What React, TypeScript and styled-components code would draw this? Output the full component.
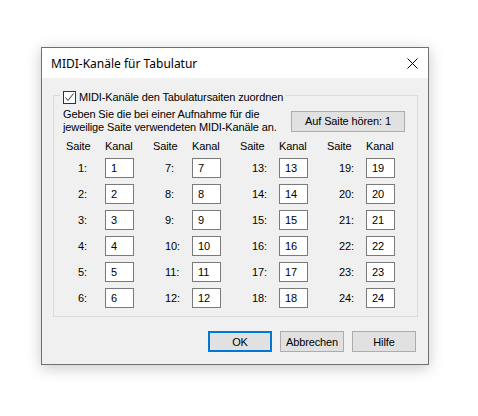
import React from 'react';
import styled, { createGlobalStyle } from 'styled-components';

const Global = createGlobalStyle`
  html, body { margin: 0; padding: 0; background: #ffffff; }
  body {
    font-family: "Liberation Sans", Arial, sans-serif;
    font-size: 11px;
    letter-spacing: -0.12px;
    color: #000000;
  }
  *, *::before, *::after { box-sizing: border-box; }
`;

const Page = styled.div`
  width: 478px;
  height: 416px;
  padding: 47px 0 0 41px;
  background: #ffffff;
`;

const Window = styled.div`
  width: 388px;
  height: 318px;
  border: 1px solid #707070;
  background: #f0f0f0;
  box-shadow: 0 3px 14px rgba(0, 0, 0, 0.22);
  display: flex;
  flex-direction: column;
`;

const TitleBar = styled.div`
  height: 30px;
  flex: none;
  background: #ffffff;
  display: flex;
  align-items: center;
  padding-left: 9px;
`;

const Title = styled.span`
  font-family: "Noto Sans", "Open Sans", sans-serif;
  font-size: 12px;
  letter-spacing: 0;
  color: #000000;
  flex: 1;
`;

const CloseButton = styled.div`
  width: 29px;
  height: 29px;
  display: flex;
  align-items: center;
  justify-content: center;
  margin-right: 1px;
`;

const Body = styled.div`
  flex: 1;
  display: flex;
  flex-direction: column;
  padding: 13px 10px 0 11px;
`;

const Group = styled.fieldset`
  margin: 0;
  width: 365px;
  height: 226px;
  border: 1px solid #dcdcdc;
  padding: 8px 12px 0 0;
  min-width: 0;
`;

const Legend = styled.legend`
  height: 9px;
  margin-left: 6px;
  padding: 0 2px 0 3px;
  display: flex;
  align-items: flex-start;
  gap: 3px;
  line-height: 13px;
`;

const CheckBox = styled.span`
  width: 13px;
  height: 13px;
  flex: none;
  border: 1px solid #333333;
  background: #ffffff;
  display: flex;
  align-items: center;
  justify-content: center;
`;

const LegendText = styled.span`
  white-space: nowrap;
  line-height: 13px;
  height: 13px;
`;

const InfoRow = styled.div`
  display: flex;
  align-items: center;
  justify-content: space-between;
  padding-left: 9px;
`;

const InfoText = styled.div`
  line-height: 13px;
`;

const Button = styled.div<{ $default?: boolean; $width: number }>`
  width: ${p => p.$width}px;
  height: 21px;
  flex: none;
  display: flex;
  align-items: center;
  justify-content: center;
  background: #e1e1e1;
  border: ${p => (p.$default ? '2px solid #0078d7' : '1px solid #adadad')};
  font-size: 11px;
  color: #000000;
`;

const ChannelGrid = styled.div`
  margin: 6px 0 0 12px;
  display: grid;
  grid-template-columns: repeat(4, 39px 48px);
  grid-template-rows: 12px repeat(6, 20px);
  row-gap: 6px;
  align-items: center;
`;

const HeadCell = styled.div`
  line-height: 12px;
  white-space: nowrap;
`;

const StringLabel = styled.div`
  padding-left: 12px;
  line-height: 13px;
`;

const ChannelField = styled.input`
  width: 29px;
  height: 20px;
  margin: 0;
  border: 1px solid #7a7a7a;
  background: #ffffff;
  padding: 0 0 0 5px;
  font-family: inherit;
  font-size: 11px;
  letter-spacing: inherit;
  color: #000000;
  outline: none;
`;

const ButtonRow = styled.div`
  margin-top: 14px;
  display: flex;
  justify-content: flex-end;
  gap: 8px;
  padding-right: 2px;
`;

const CloseIcon = () => (
  <svg width="11" height="11" viewBox="0 0 11 11">
    <path d="M0.5 0.5 L10.5 10.5 M10.5 0.5 L0.5 10.5" stroke="#000" strokeWidth="1" fill="none" />
  </svg>
);

const CheckIcon = () => (
  <svg width="11" height="11" viewBox="0 0 11 11">
    <polyline points="1.5,5.5 4,8.5 9.5,1.5" stroke="#333" strokeWidth="1" fill="none" />
  </svg>
);

const rows = [0, 1, 2, 3, 4, 5];
const cols = [0, 1, 2, 3];

export default function App() {
  return (
    <>
      <Global />
      <Page>
        <Window>
          <TitleBar>
            <Title>MIDI-Kanäle für Tabulatur</Title>
            <CloseButton>
              <CloseIcon />
            </CloseButton>
          </TitleBar>
          <Body>
            <Group>
              <Legend>
                <CheckBox>
                  <CheckIcon />
                </CheckBox>
                <LegendText>MIDI-Kanäle den Tabulatursaiten zuordnen</LegendText>
              </Legend>
              <InfoRow>
                <InfoText>
                  Geben Sie die bei einer Aufnahme für die
                  <br />
                  jeweilige Saite verwendeten MIDI-Kanäle an.
                </InfoText>
                <Button $width={114}>Auf Saite hören: 1</Button>
              </InfoRow>
              <ChannelGrid>
                {cols.map(c => (
                  <React.Fragment key={`h${c}`}>
                    <HeadCell>Saite</HeadCell>
                    <HeadCell>Kanal</HeadCell>
                  </React.Fragment>
                ))}
                {rows.map(r =>
                  cols.map(c => {
                    const n = c * 6 + r + 1;
                    return (
                      <React.Fragment key={n}>
                        <StringLabel>{n}:</StringLabel>
                        <ChannelField readOnly value={String(n)} />
                      </React.Fragment>
                    );
                  })
                )}
              </ChannelGrid>
            </Group>
            <ButtonRow>
              <Button $width={64} $default>OK</Button>
              <Button $width={64}>Abbrechen</Button>
              <Button $width={64}>Hilfe</Button>
            </ButtonRow>
          </Body>
        </Window>
      </Page>
    </>
  );
}
